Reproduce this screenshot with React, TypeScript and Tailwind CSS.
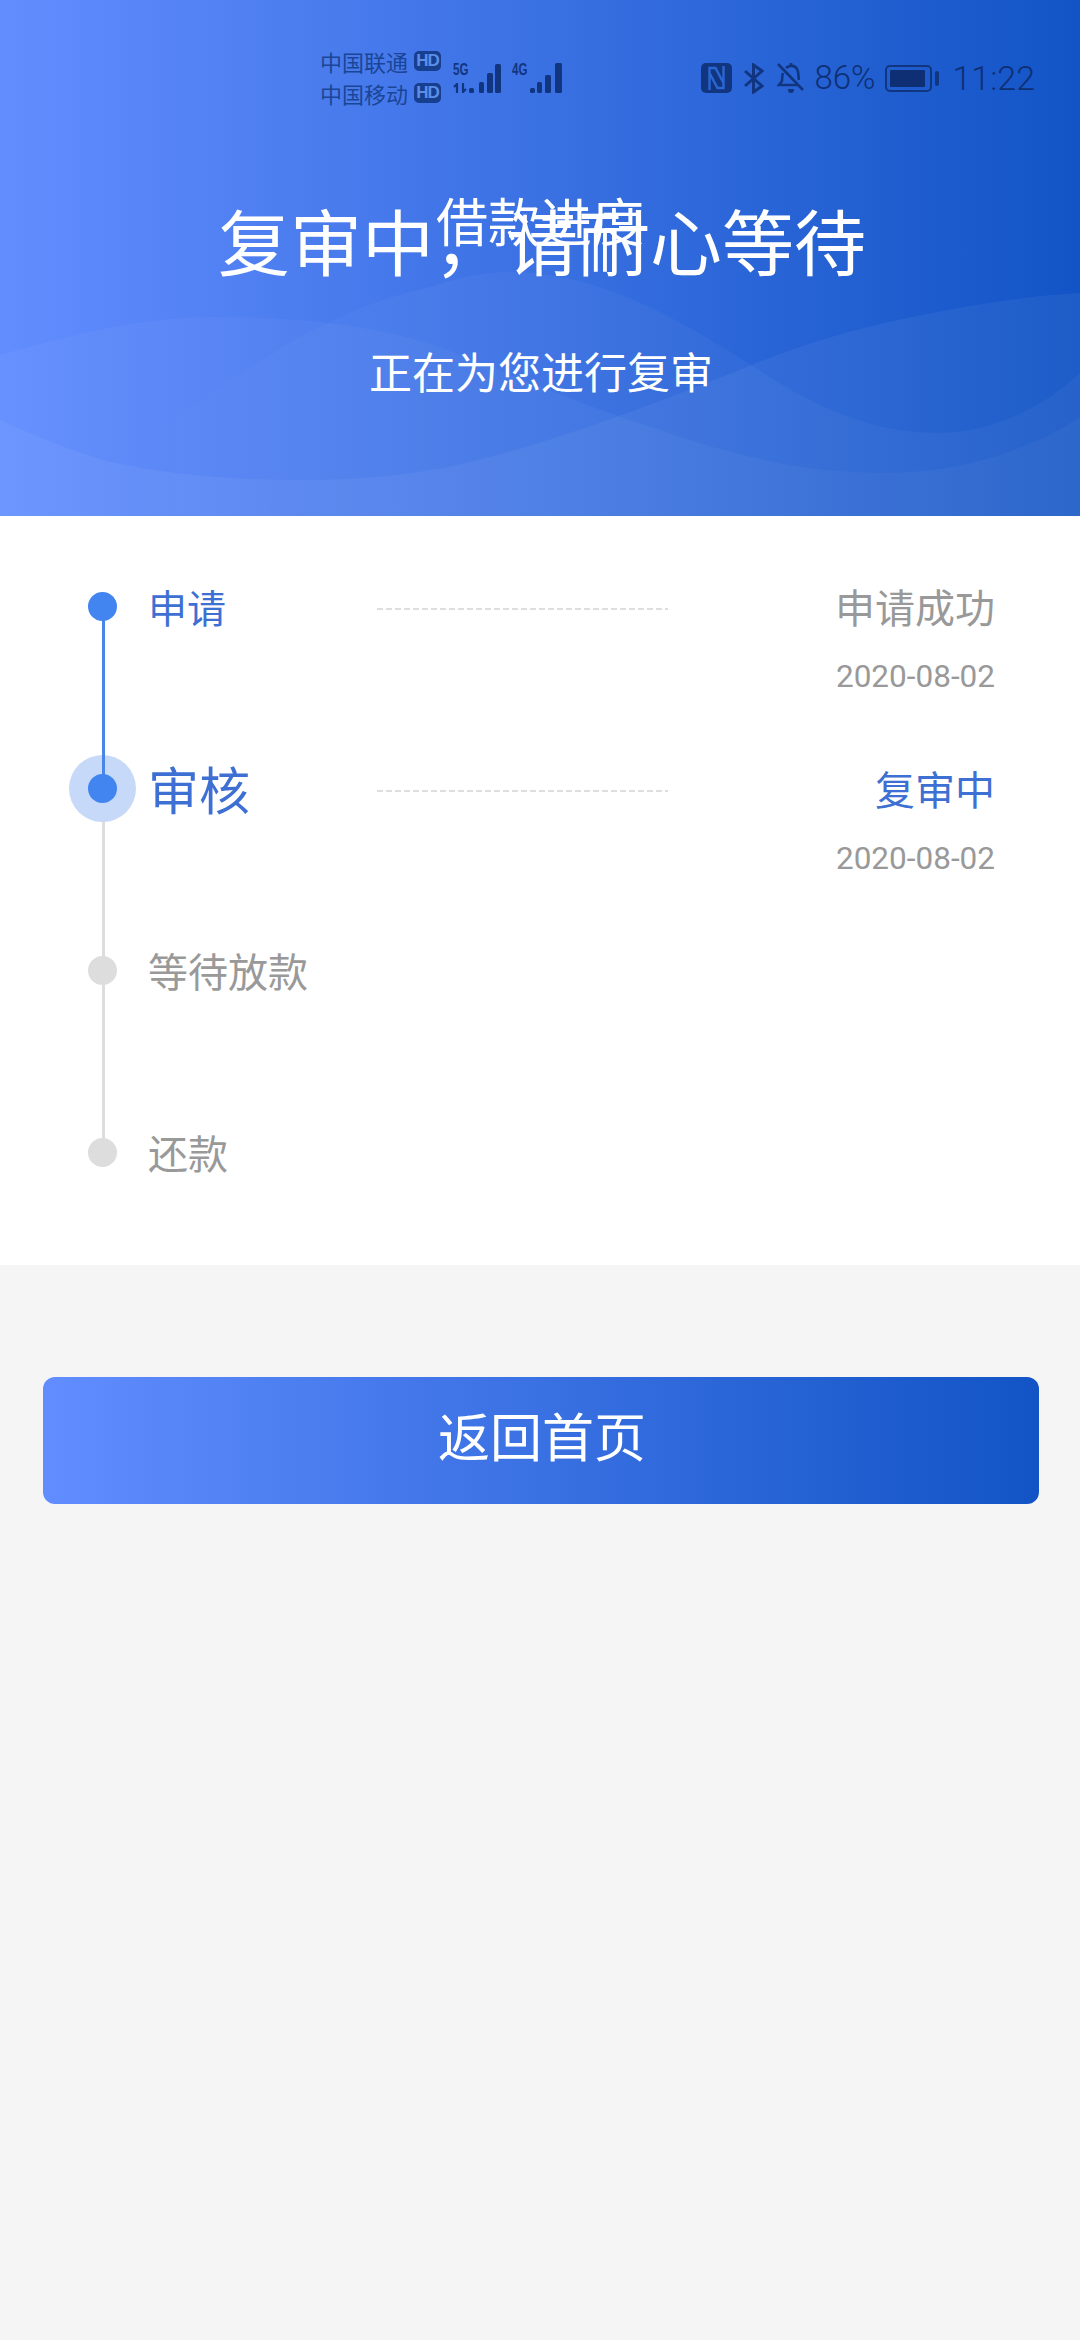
import React from "react";

const cjk = "font-['Noto_Sans_CJK_SC','Noto_Sans',sans-serif]";

function Signal({ bars }: { bars: [number, number, number][] }) {
  const x0 = Math.min(...bars.map((b) => b[0]));
  const w = Math.max(...bars.map((b) => b[0] + b[1])) - x0;
  return (
    <svg width={w} height={30} viewBox={`0 0 ${w} 30`} fill="#123580">
      {bars.map((b, i) => (
        <rect key={i} x={b[0] - x0} y={30 - b[2]} width={b[1]} height={b[2]} rx={1.5} />
      ))}
    </svg>
  );
}

function Carrier({ name }: { name: string }) {
  return (
    <div className="flex items-center h-[32px]">
      <span className="text-[22px] leading-[32px] w-[94px] text-[#1b4596]">{name}</span>
      <span className="w-[27px] h-[20px] rounded-[5px] bg-[#173f8f] text-[#5d8fe8] text-[17px] leading-[20px] font-bold text-center font-['Liberation_Sans',sans-serif] tracking-[-1px]">
        HD
      </span>
    </div>
  );
}

function StatusBar() {
  return (
    <div className={`relative flex items-center justify-between h-[60px] mt-[48px] pl-[320px] pr-[45px] text-[#123580] ${cjk}`}>
      <div className="flex items-center">
        <div className="flex flex-col -mt-[2px]">
          <Carrier name="中国联通" />
          <Carrier name="中国移动" />
        </div>
        <div className="ml-[12px] h-[30px] flex items-end">
          <div className="w-[16px] h-[30px] flex flex-col justify-between">
            <span className="text-[16px] leading-[14px] font-bold font-['Liberation_Sans',sans-serif] scale-x-[0.72] origin-left">5G</span>
            <svg width="15" height="10" viewBox="0 0 15 10" fill="none" stroke="#123580" strokeWidth="2.2">
              <path d="M4 10V1L1 4M10 0v9l3-3" />
            </svg>
          </div>
          <Signal bars={[[0, 5, 5], [10, 5, 11], [18, 6, 20], [26, 6, 29]]} />
        </div>
        <div className="ml-[11px] h-[30px] flex items-start">
          <span className="w-[18px] text-[16px] leading-[14px] font-bold font-['Liberation_Sans',sans-serif] scale-x-[0.72] origin-left">4G</span>
          <div className="flex items-end h-[30px]">
            <Signal bars={[[0, 5, 5], [7, 5, 11], [15, 6, 18], [25, 7, 30]]} />
          </div>
        </div>
      </div>
      <div className="flex items-center">
        <svg width="31" height="30" viewBox="0 0 31 30" className="mr-[11px]">
          <rect width="31" height="30" rx="5" fill="#123580" />
          <path fill="none" stroke="#2a67d2" strokeWidth="2.4" d="M8.5 27V5h6l8 15M22.5 3v22h-6l-8-15" />
        </svg>
        <svg width="21" height="31" viewBox="0 0 21 31" fill="none" stroke="#123580" strokeWidth="3" className="mr-[12px]">
          <path d="M2 8l17 15-8.5 6V2L19 8 2 23" />
        </svg>
        <svg width="29" height="30" viewBox="0 0 29 30" fill="none" stroke="#123580" strokeWidth="2.6" className="mr-[9px]">
          <path d="M2 1l25 26" />
          <path d="M7 10c-1 3-1 6-1 8l-3 4h19M10 5c3-3 9-3 11 1 2 3 1 7 2 11" />
          <path d="M12 26h6v1a3 3 0 0 1-6 0z" fill="#123580" stroke="none" />
          <path d="M15 0v3" />
        </svg>
        <span className="text-[33px] leading-[40px] font-['Roboto',sans-serif] font-light mr-[10px] text-[#0f2f75]">86%</span>
        <div className="w-[47px] h-[27px] rounded-[5px] border-2 border-[#123580] p-[3px] mr-[3px]">
          <div className="w-[35px] h-full bg-[#0f2f75] rounded-[1px]" />
        </div>
        <div className="w-[4px] h-[15px] rounded-[2px] bg-[#123580] mr-[13px]" />
        <span className="text-[34px] leading-[40px] font-['Roboto',sans-serif] font-light text-[#0f2f75]">11:22</span>
      </div>
    </div>
  );
}

function Waves() {
  return (
    <svg className="absolute inset-0" width="1080" height="516" viewBox="0 0 1080 516" fill="#ffffff">
      <defs>
        <linearGradient id="humpFade" gradientUnits="userSpaceOnUse" x1="140" y1="0" x2="420" y2="0">
          <stop offset="0" stopColor="#ffffff" stopOpacity="0" />
          <stop offset="1" stopColor="#ffffff" stopOpacity="0.035" />
        </linearGradient>
      </defs>
      <path fillOpacity="0.035" d="M0 355C70 335 140 317 214 317C300 317 380 325 448 350C520 378 590 408 660 430C740 458 810 473 885 473C960 473 1030 450 1080 417V516H0Z" />
      <path fillOpacity="0.05" d="M0 420C35 436 70 450 103 460C170 476 240 480 310 480C360 480 405 475 448 467C530 450 640 410 747 367C795 347 840 333 885 323C950 308 1020 296 1080 293V516H0Z" />
      <path fill="url(#humpFade)" d="M0 516C70 480 130 445 190 407C240 375 280 345 328 323C360 306 395 295 431 287C455 279 480 272 510 272C600 272 680 320 754 367C810 405 870 433 936 433C990 433 1040 410 1080 373V516H0Z" />
    </svg>
  );
}

type StepProps = {
  state: "done" | "active" | "todo";
  label: string;
  status?: string;
  date?: string;
  line?: "blue" | "grey";
  h?: string;
};

function Step({ state, label, status, date, line, h }: StepProps) {
  return (
    <div className={`relative flex items-start ${h ?? "h-[182px]"}`}>
      {line && (
        <div className={`absolute left-[102px] top-[30px] w-[3px] h-[182px] ${line === "blue" ? "bg-[#4a86e8]" : "bg-[#dddddd]"}`} />
      )}
      <div className="relative w-[148px] h-[60px] shrink-0">
        {state === "active" && (
          <div className="absolute left-[69px] top-[-3px] w-[67px] h-[67px] rounded-full bg-[#c6d9f8]" />
        )}
        {state === "active" && (
          <div className="absolute left-[102px] top-[-3px] w-[3px] h-[22px] bg-[#4a86e8]" />
        )}
        <div
          className={`absolute left-[88px] top-[16px] w-[29px] h-[29px] rounded-full ${
            state === "todo" ? "bg-[#dddddd]" : "bg-[#4285f0]"
          }`}
        />
      </div>
      <div
        className={`shrink-0 h-[60px] leading-[60px] w-[229px] ${
          state === "todo"
            ? "text-[40px] text-[#999999]"
            : state === "active"
            ? "text-[51px] text-[#3d70d2]"
            : "text-[39px] text-[#3d70d2]"
        }`}
      >
        {label}
      </div>
      {status && (
        <>
          <div className="w-[291px] h-[2px] mt-[32px] shrink-0 bg-[repeating-linear-gradient(90deg,#dedede_0,#dedede_6px,transparent_6px,transparent_9px)]" />
          <div className="flex-1 pr-[85px] text-right">
            <div className={`text-[40px] leading-[60px] ${state === "active" ? "text-[#3d70d2]" : "text-[#999999]"}`}>{status}</div>
            <div className="mt-[23px] text-[31.5px] leading-[36px] text-[#999999] font-['Roboto',sans-serif]">{date}</div>
          </div>
        </>
      )}
    </div>
  );
}

export default function App() {
  return (
    <div className={`w-[1080px] h-[2340px] bg-[#f5f5f6] overflow-hidden ${cjk}`}>
      <header className="relative h-[516px] overflow-hidden bg-[linear-gradient(90deg,#628dff_0%,#1254c6_100%)]">
        <Waves />
        <StatusBar />
        <div className="absolute left-0 right-0 top-[190px] text-center text-white text-[52px] leading-[60px]">借款进度</div>
        <h1 className="relative mt-[89px] text-center text-white text-[72px] leading-[84px] font-normal translate-x-[2px]">复审中，请耐心等待</h1>
        <p className="relative mt-[59px] text-center text-white text-[43px] leading-[60px] translate-x-[1px]">正在为您进行复审</p>
      </header>
      <section className="bg-white pt-[60px] h-[749px]">
        <Step state="done" label="申请" status="申请成功" date="2020-08-02" line="blue" />
        <Step state="active" label="审核" status="复审中" date="2020-08-02" line="grey" />
        <Step state="todo" label="等待放款" line="grey" />
        <Step state="todo" label="还款" h="h-[143px]" />
      </section>
      <div className="px-[43px] pt-[112px]">
        <button className="w-[996px] h-[127px] pb-[11px] rounded-[12px] text-white text-[52px] bg-[linear-gradient(90deg,#618dff_0%,#1254c6_100%)]">
          <span className="relative left-[1px]">返回首页</span>
        </button>
      </div>
    </div>
  );
}
